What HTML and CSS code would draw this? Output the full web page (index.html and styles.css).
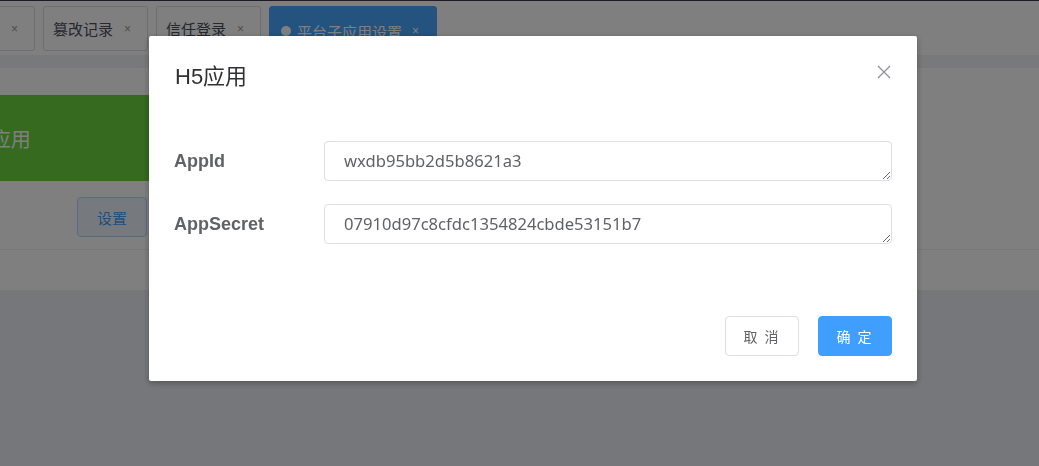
FILE: index.html
```html
<!DOCTYPE html>
<html lang="zh-CN">
<head>
<meta charset="utf-8">
<title>平台子应用设置</title>
<link rel="stylesheet" href="styles.css">
</head>
<body>
<div class="page">
  <div class="topline"></div>
  <div class="tabbar">
    <div class="tab"><span class="tab-label">登录日志</span><span class="tab-close">×</span></div>
    <div class="tab"><span class="tab-label">篡改记录</span><span class="tab-close">×</span></div>
    <div class="tab"><span class="tab-label">信任登录</span><span class="tab-close">×</span></div>
    <div class="tab tab-active"><span class="tab-dot"></span><span class="tab-label">平台子应用设置</span><span class="tab-close">×</span></div>
  </div>
  <div class="strip"></div>
  <div class="card">
    <div class="app-head"><span class="app-title">平台H5应用</span></div>
    <div class="app-row">
      <button class="btn-plain">设置</button>
    </div>
    <div class="app-foot"></div>
  </div>
</div>

<div class="mask"></div>
<div class="dialog">
  <div class="dialog-header">
    <span class="dialog-title">H5应用</span>
    <button class="dialog-close" aria-label="关闭">
      <svg width="14" height="14" viewBox="0 0 14 14"><path d="M1 1L13 13M13 1L1 13" stroke="#909399" stroke-width="1.3" fill="none"/></svg>
    </button>
  </div>
  <div class="dialog-body">
    <div class="form-row">
      <label class="form-label">AppId</label>
      <textarea class="form-input" rows="1">wxdb95bb2d5b8621a3</textarea>
    </div>
    <div class="form-row">
      <label class="form-label">AppSecret</label>
      <textarea class="form-input" rows="1">07910d97c8cfdc1354824cbde53151b7</textarea>
    </div>
  </div>
  <div class="dialog-footer">
    <button class="btn btn-default">取 消</button>
    <button class="btn btn-primary">确 定</button>
  </div>
</div>
</body>
</html>
```

FILE: styles.css
```css
* { box-sizing: border-box; }
html, body { margin: 0; padding: 0; }
body {
  width: 1039px;
  height: 466px;
  overflow: hidden;
  background: #eceef5;
  font-family: "Noto Sans", "Noto Sans CJK SC", sans-serif;
}
.page { display: flex; flex-direction: column; }
.topline { height: 1px; background: #363848; }
.tabbar {
  height: 54px;
  background: #ffffff;
  display: flex;
  align-items: flex-start;
  gap: 8px;
  padding-top: 5px;
  margin-left: -70px;
}
.tab {
  width: 105px;
  height: 45px;
  border: 1px solid #d8dce5;
  border-radius: 3px;
  display: flex;
  align-items: center;
  padding: 0 0 0 9px;
  color: #495060;
  font-size: 15px;
  font-family: "Noto Sans CJK SC", sans-serif;
  background: #fff;
}
.tab-close { font-size: 12px; color: #999; margin-left: 11px; font-family: "Liberation Sans", sans-serif; }
.tab-active {
  width: 168px;
  background: #4aa6ff;
  border-color: #4aa6ff;
  color: #fff;
  height: 50px;
  border-radius: 3px 3px 0 0;
  padding-left: 11px;
}
.tab-active .tab-close { color: #fff; margin-left: 10px; }
.tab-dot {
  width: 10px; height: 10px; border-radius: 50%;
  background: #fff; margin-right: 6px;
}
.strip { height: 13px; background: #f0f2f7; }
.card {
  height: 222px;
  background: #fff;
  padding-top: 27px;
  display: flex;
  flex-direction: column;
}
.app-head {
  height: 86px;
  background: #6ad43e;
  display: flex;
  align-items: center;
  margin-left: -75px;
  width: 400px;
}
.app-title { color: #fff; font-size: 20px; font-family: "Noto Sans CJK SC", sans-serif; }
.app-row {
  height: 69px;
  border-bottom: 1px solid #ebeef5;
  padding: 16px 0 0 77px;
}
.btn-plain {
  width: 70px; height: 40px;
  background: #ecf5ff;
  border: 1px solid #b3d8ff;
  color: #409eff;
  border-radius: 4px;
  font-size: 15px;
  font-family: "Noto Sans CJK SC", sans-serif;
  padding: 0;
}

.mask {
  position: fixed;
  inset: 0;
  background: rgba(0, 0, 0, 0.5);
}
.dialog {
  position: fixed;
  left: 149px;
  top: 36px;
  width: 768px;
  height: 345px;
  background: #fff;
  border-radius: 2px;
  box-shadow: 0 2px 6px rgba(0, 0, 0, 0.3);
  padding: 25px 25px 25px 25px;
  display: flex;
  flex-direction: column;
}
.dialog-header {
  display: flex;
  justify-content: space-between;
  align-items: center;
  height: 30px;
}
.dialog-title {
  font-size: 22px;
  color: #303133;
  line-height: 30px;
  font-family: "Liberation Sans", "Noto Sans CJK SC", sans-serif;
  padding-left: 1px;
  margin-top: 2px;
}
.dialog-close {
  background: none; border: none; padding: 0;
  width: 14px; height: 14px;
  margin-right: 1px;
  margin-top: -8px;
}
.dialog-close svg { display: block; }
.dialog-body {
  margin-top: 50px;
  display: flex;
  flex-direction: column;
  gap: 23px;
}
.form-row { display: flex; align-items: center; height: 40px; }
.form-label {
  width: 150px;
  font-family: "Liberation Sans", sans-serif;
  font-weight: bold;
  font-size: 18px;
  color: #606266;
}
.form-input {
  flex: 1;
  height: 40px;
  border: 1px solid #dcdfe6;
  border-radius: 4px;
  padding: 8px 19px;
  font-family: "Noto Sans", sans-serif;
  font-size: 16.6px;
  line-height: 22px;
  color: #606266;
  overflow: hidden;
  outline: none;
}
.dialog-footer {
  margin-top: auto;
  display: flex;
  justify-content: flex-end;
  gap: 19px;
}
.btn {
  width: 74px;
  height: 40px;
  border-radius: 4px;
  font-size: 14px;
  font-family: "Noto Sans CJK SC", sans-serif;
  padding: 0;
  letter-spacing: 2px;
}
.btn-default { background: #fff; border: 1px solid #dcdfe6; color: #606266; }
.btn-primary { background: #409eff; border: 1px solid #409eff; color: #fff; }
```
